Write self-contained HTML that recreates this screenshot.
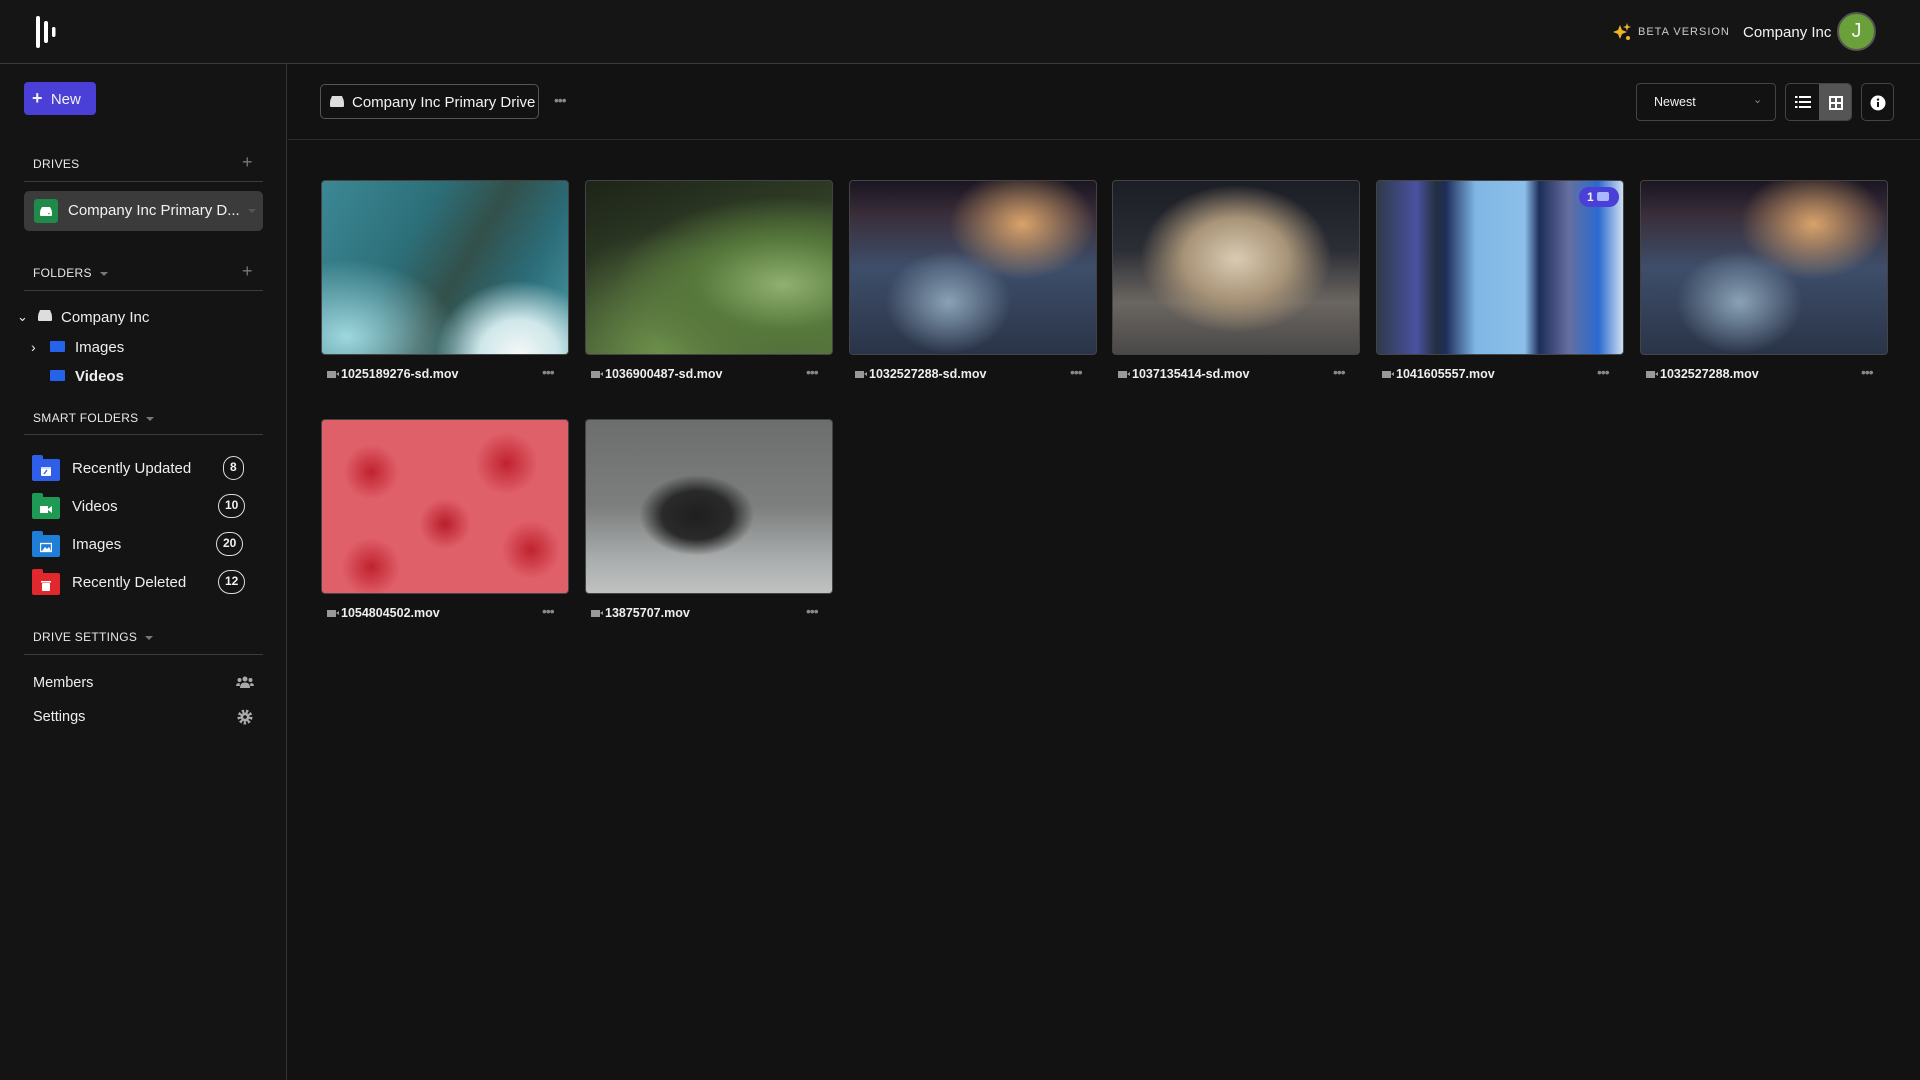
<!DOCTYPE html>
<html><head><meta charset="utf-8"><style>
*{box-sizing:border-box;margin:0;padding:0}
body{width:1920px;height:1080px;background:#121212;font-family:"Liberation Sans",sans-serif;color:#f2f2f2;position:relative;overflow:hidden}
.abs{position:absolute}
.hdr{left:0;top:0;width:1920px;height:64px;border-bottom:1px solid #3a3a3a;background:#151515}
.side{left:0;top:64px;width:287px;height:1016px;border-right:1px solid #333;background:#141414}
.lbl{font-size:12px;letter-spacing:.3px;color:#e8e8e8;position:absolute;left:33px}
.line{position:absolute;left:24px;width:239px;height:1px;background:#3c3c3c}
.plus{position:absolute;left:242px;color:#777;font-size:18px}
.caret{display:inline-block;width:0;height:0;border-left:4px solid transparent;border-right:4px solid transparent;border-top:4px solid #777;margin-left:8px;vertical-align:middle}
.item{position:absolute;font-size:15px;color:#eee}
.badge{position:absolute;height:24px;border:1.5px solid #ddd;border-radius:12px;font-size:12px;font-weight:bold;text-align:center;line-height:21px;padding:0 6px}
.fold{position:absolute;left:32px;width:28px;height:22px;border-radius:2px}
.fold:before{content:"";position:absolute;left:0;top:-4px;width:11px;height:6px;background:inherit;border-radius:2px 2px 0 0}
.fold svg{position:absolute;left:8px;top:6px}
.card{position:absolute;width:248px;height:175px;border-radius:4px;overflow:hidden;border:1px solid #444}
.name{position:absolute;font-size:12.5px;font-weight:bold;color:#eee}
.cam{display:inline-block;width:9px;height:7px;background:#999;margin-right:5px;position:relative;vertical-align:0}
.cam:after{content:"";position:absolute;left:9px;top:1px;border-top:2.5px solid transparent;border-bottom:2.5px solid transparent;border-right:3px solid #999}
.dots{position:absolute;color:#888;font-size:14px;letter-spacing:-1px}
</style></head><body>
<div class="abs hdr">
 <svg class="abs" style="left:33px;top:15px" width="26" height="34"><rect x="3" y="1" width="4" height="32" rx="2" fill="#fff"/><rect x="11" y="6" width="4" height="22" rx="2" fill="#fff"/><rect x="19" y="12" width="3.5" height="10" rx="1.7" fill="#fff"/></svg>
 <svg class="abs" style="left:1613px;top:23px" width="18" height="18"><path d="M7 2 L9 7 L14 9 L9 11 L7 16 L5 11 L0 9 L5 7Z" fill="#f0b429"/><path d="M14 0 L15 3 L18 4 L15 5 L14 8 L13 5 L10 4 L13 3Z" fill="#f0b429"/><circle cx="15" cy="15" r="2" fill="#f0b429"/></svg>
 <div class="abs" style="left:1638px;top:26px;font-size:11px;letter-spacing:1px;color:#ccc">BETA VERSION</div>
 <div class="abs" style="left:1743px;top:24px;font-size:15px;font-weight:500">Company Inc</div>
 <div class="abs" style="left:1837px;top:12px;width:39px;height:39px;border-radius:50%;background:#6aa03a;border:2px solid #555;text-align:center;line-height:35px;font-size:20px">J</div>
</div>
<div class="abs side">
 <div class="abs" style="left:24px;top:18px;width:72px;height:33px;background:#4a3fd6;border-radius:4px;font-size:15px;line-height:33px;padding-left:8px"><b style="font-size:18px">+</b>&nbsp; New</div>
 <div class="lbl" style="top:93px">DRIVES</div><div class="plus" style="top:88px">+</div>
 <div class="line" style="top:117px"></div>
 <div class="abs" style="left:24px;top:127px;width:239px;height:40px;background:#3b3b3b;border-radius:5px">
  <div class="abs" style="left:10px;top:8px;width:24px;height:24px;background:#1f8a4a;border-radius:3px"><svg width="24" height="24"><path d="M6 12 L8 8 H16 L18 12Z" fill="#fff"/><rect x="6" y="12" width="12" height="5" rx="1" fill="#fff"/><circle cx="15" cy="14.5" r="0.8" fill="#1f8a4a"/></svg></div>
  <div class="abs" style="left:44px;top:11px;font-size:15px;font-weight:500">Company Inc Primary D...</div>
  <span class="caret abs" style="left:216px;top:18px;border-top-color:#555"></span>
 </div>
 <div class="lbl" style="top:202px">FOLDERS<span class="caret"></span></div><div class="plus" style="top:197px">+</div>
 <div class="line" style="top:226px"></div>
 <div class="item" style="left:17px;top:245px;font-size:13px">⌄</div>
 <svg class="abs" style="left:36px;top:245px" width="18" height="14"><path d="M2 6 L4 1 H14 L16 6Z" fill="#ddd"/><rect x="2" y="6" width="14" height="6" rx="1" fill="#ddd"/></svg>
 <div class="item" style="left:61px;top:245px">Company Inc</div>
 <div class="item" style="left:31px;top:275px;font-size:14px">›</div>
 <div class="abs" style="left:50px;top:277px;width:15px;height:11px;background:#2563eb;border-radius:1px"></div>
 <div class="item" style="left:75px;top:275px">Images</div>
 <div class="abs" style="left:50px;top:306px;width:15px;height:11px;background:#2563eb;border-radius:1px"></div>
 <div class="item" style="left:75px;top:304px;font-weight:bold">Videos</div>
 <div class="lbl" style="top:347px">SMART FOLDERS<span class="caret"></span></div>
 <div class="line" style="top:370px"></div>
 <div class="fold" style="top:395px;background:#2f5ee8"><svg width="12" height="12"><rect x="1" y="2" width="10" height="9" rx="1" fill="#fff"/><rect x="1" y="2" width="10" height="2" fill="#cfdcff"/><path d="M4 9 L7 5" stroke="#2f5ee8" stroke-width="1.3"/></svg></div><div class="item" style="left:72px;top:396px">Recently Updated</div><div class="badge" style="left:223px;top:392px">8</div>
 <div class="fold" style="top:433px;background:#1e9a55"><svg width="13" height="12"><rect x="0" y="3" width="8" height="7" fill="#fff"/><path d="M8 6 L12 3 V10 L8 7Z" fill="#fff"/></svg></div><div class="item" style="left:72px;top:434px">Videos</div><div class="badge" style="left:218px;top:430px">10</div>
 <div class="fold" style="top:471px;background:#1f7fd6"><svg width="12" height="12"><rect x="0.5" y="2.5" width="11" height="8" fill="none" stroke="#fff" stroke-width="1.3"/><path d="M2 10 L5 6 L7 8 L9 6 L11 10Z" fill="#fff"/></svg></div><div class="item" style="left:72px;top:472px">Images</div><div class="badge" style="left:216px;top:468px">20</div>
 <div class="fold" style="top:509px;background:#e0282e"><svg width="12" height="13"><rect x="1" y="2" width="10" height="1.5" fill="#fff"/><rect x="2" y="4" width="8" height="8" rx="1" fill="#fff"/></svg></div><div class="item" style="left:72px;top:510px">Recently Deleted</div><div class="badge" style="left:218px;top:506px">12</div>
 <div class="lbl" style="top:566px">DRIVE SETTINGS<span class="caret"></span></div>
 <div class="line" style="top:590px"></div>
 <div class="item" style="left:33px;top:611px;font-size:14.5px">Members</div>
 <svg class="abs" style="left:236px;top:611px" width="18" height="14"><circle cx="9" cy="4" r="2.5" fill="#aaa"/><circle cx="3.5" cy="5" r="2" fill="#aaa"/><circle cx="14.5" cy="5" r="2" fill="#aaa"/><path d="M4 13 Q4 7.5 9 7.5 Q14 7.5 14 13Z M0 11 Q0 8 3.5 8 L4 11Z M18 11 Q18 8 14.5 8 L14 11Z" fill="#aaa"/></svg>
 <div class="item" style="left:33px;top:645px;font-size:14.5px">Settings</div>
 <svg class="abs" style="left:237px;top:645px" width="16" height="16"><circle cx="8" cy="8" r="5.5" fill="none" stroke="#aaa" stroke-width="4" stroke-dasharray="2.2 1.6"/><circle cx="8" cy="8" r="4.5" fill="#aaa"/><circle cx="8" cy="8" r="1.8" fill="#141414"/></svg>
</div>
<div class="abs" style="left:288px;top:139px;width:1632px;height:1px;background:#2e2e2e"></div>
<div class="abs" style="left:320px;top:84px;width:219px;height:35px;border:1px solid #555;border-radius:5px">
 <svg class="abs" style="left:7px;top:10px" width="18" height="14"><path d="M2 6 L4 1 H14 L16 6Z" fill="#ddd"/><rect x="2" y="6" width="14" height="6" rx="1" fill="#ddd"/></svg>
 <div class="abs" style="left:31px;top:9px;font-size:15px;white-space:nowrap">Company Inc Primary Drive</div>
</div>
<div class="dots" style="left:554px;top:92px">•••</div>
<div class="abs" style="left:1636px;top:83px;width:140px;height:38px;border:1px solid #444;border-radius:4px;font-size:12.5px;line-height:36px;padding-left:17px">Newest<span class="abs" style="left:116px;top:-2px;color:#888;font-size:11px">⌄</span></div>
<div class="abs" style="left:1785px;top:83px;width:67px;height:38px;border:1px solid #444;border-radius:5px;overflow:hidden">
 <div class="abs" style="left:33px;top:0;width:34px;height:38px;background:#555"></div>
 <svg class="abs" style="left:9px;top:11px" width="16" height="14"><g fill="#fff"><rect x="0" y="1" width="2.5" height="2"/><rect x="4" y="1" width="12" height="2"/><rect x="0" y="6" width="2.5" height="2"/><rect x="4" y="6" width="12" height="2"/><rect x="0" y="11" width="2.5" height="2"/><rect x="4" y="11" width="12" height="2"/></g></svg>
 <svg class="abs" style="left:43px;top:12px" width="14" height="14"><rect x="1" y="1" width="12" height="12" fill="none" stroke="#fff" stroke-width="2"/><path d="M7 1V13M1 7H13" stroke="#fff" stroke-width="2"/></svg>
</div>
<div class="abs" style="left:1861px;top:83px;width:33px;height:38px;border:1px solid #444;border-radius:5px">
 <svg class="abs" style="left:8px;top:11px" width="16" height="16"><circle cx="8" cy="8" r="7.5" fill="#fff"/><rect x="7" y="7" width="2" height="5" fill="#121212"/><circle cx="8" cy="4.6" r="1.2" fill="#121212"/></svg>
</div>

<div class="card" style="left:321px;top:180px;background:radial-gradient(ellipse at 80% 100%,#f4f7f7 0,#cfe7ea 14%,transparent 30%),radial-gradient(ellipse at 10% 90%,#9fd7de 0,transparent 35%),linear-gradient(120deg,#3c8895 0,#2c6f79 35%,#33504a 55%,#2b6c78 75%,#4a9aa5 100%)"></div>
<div class="card" style="left:585px;top:180px;background:radial-gradient(ellipse at 80% 60%,#8fb070 0,#587a3c 30%,transparent 60%),radial-gradient(ellipse at 30% 100%,#6c8f4a 0,transparent 50%),linear-gradient(160deg,#1d2418 0,#2f3c26 40%,#55703e 100%)"></div>
<div class="card" style="left:849px;top:180px;background:radial-gradient(ellipse at 40% 70%,#8aa2b6 0,transparent 30%),radial-gradient(ellipse at 70% 25%,#d9a36a 0,transparent 30%),linear-gradient(180deg,#1a1622 0,#3a2e3a 20%,#3e4e6a 50%,#2a3448 100%)"></div>
<div class="card" style="left:1112px;top:180px;background:radial-gradient(ellipse at 50% 45%,#d9cbb3 0,#a89478 30%,transparent 55%),linear-gradient(180deg,#1c1e26 0,#2c2e36 40%,#6b6660 70%,#4a4848 100%)"></div>
<div class="card" style="left:1376px;top:180px;background:linear-gradient(90deg,#2e3a4a 0,#4a52a0 16%,#243040 24%,#1e2d5a 28%,#7fb6e4 40%,#8cc0ea 60%,#1e2d5a 66%,#6670a0 78%,#2a6ad0 90%,#d0dff0 100%)">
 <div class="abs" style="left:202px;top:6px;width:40px;height:20px;border-radius:10px;background:#4a3fd6;font-size:12px;font-weight:bold;line-height:20px;padding-left:8px">1 <span style="display:inline-block;width:12px;height:9px;background:#aab8ff;border-radius:2px"></span></div>
</div>
<div class="card" style="left:1640px;top:180px;background:radial-gradient(ellipse at 40% 70%,#8aa2b6 0,transparent 30%),radial-gradient(ellipse at 70% 25%,#d9a36a 0,transparent 30%),linear-gradient(180deg,#1a1622 0,#3a2e3a 20%,#3e4e6a 50%,#2a3448 100%)"></div>
<div class="card" style="left:321px;top:419px;background:radial-gradient(circle at 20% 30%,#c0222e 0,transparent 12%),radial-gradient(circle at 75% 25%,#c0222e 0,transparent 14%),radial-gradient(circle at 50% 60%,#b81e2a 0,transparent 16%),radial-gradient(circle at 85% 75%,#c0222e 0,transparent 12%),radial-gradient(circle at 20% 85%,#c0222e 0,transparent 12%),#e0606a"></div>
<div class="card" style="left:585px;top:419px;background:radial-gradient(ellipse at 45% 55%,#1e1e1e 0,#2a2a2a 18%,transparent 30%),linear-gradient(180deg,#6c6e6e 0,#7d7f7f 50%,#a9acac 80%,#c0c2c2 100%)"></div>

<div class="name" style="left:327px;top:367px"><span class="cam"></span>1025189276-sd.mov</div><div class="dots" style="left:542px;top:364px">•••</div>
<div class="name" style="left:591px;top:367px"><span class="cam"></span>1036900487-sd.mov</div><div class="dots" style="left:806px;top:364px">•••</div>
<div class="name" style="left:855px;top:367px"><span class="cam"></span>1032527288-sd.mov</div><div class="dots" style="left:1070px;top:364px">•••</div>
<div class="name" style="left:1118px;top:367px"><span class="cam"></span>1037135414-sd.mov</div><div class="dots" style="left:1333px;top:364px">•••</div>
<div class="name" style="left:1382px;top:367px"><span class="cam"></span>1041605557.mov</div><div class="dots" style="left:1597px;top:364px">•••</div>
<div class="name" style="left:1646px;top:367px"><span class="cam"></span>1032527288.mov</div><div class="dots" style="left:1861px;top:364px">•••</div>
<div class="name" style="left:327px;top:606px"><span class="cam"></span>1054804502.mov</div><div class="dots" style="left:542px;top:603px">•••</div>
<div class="name" style="left:591px;top:606px"><span class="cam"></span>13875707.mov</div><div class="dots" style="left:806px;top:603px">•••</div>
</body></html>
